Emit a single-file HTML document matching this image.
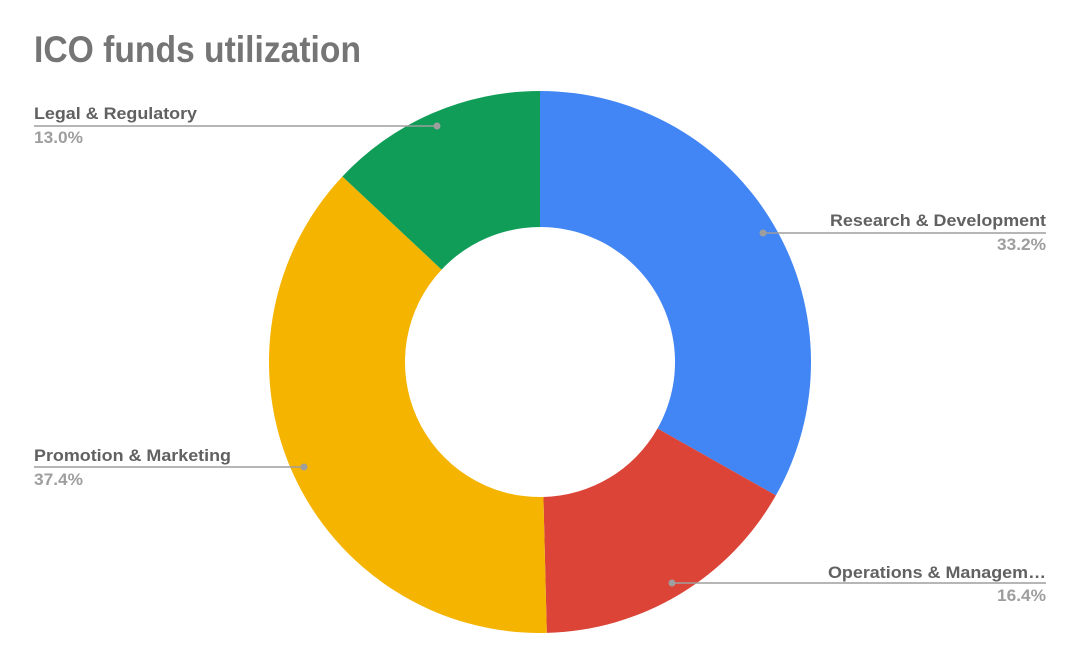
<!DOCTYPE html>
<html><head><meta charset="utf-8"><style>
html,body{margin:0;padding:0;background:#fff;}
svg{display:block;}
text{font-family:"Liberation Sans",Arial,sans-serif;font-weight:bold;}
</style></head><body>
<svg width="1079" height="667" viewBox="0 0 1079 667">
<text x="34" y="62" font-size="37" fill="#757575" textLength="327" lengthAdjust="spacingAndGlyphs">ICO funds utilization</text>
<path d="M540,91 A271,271 0 0 1 775.9,495.4 L657.5,428.5 A135,135 0 0 0 540,227 Z" fill="#4285f4"/>
<path d="M775.9,495.4 A271,271 0 0 1 546.8,632.9 L543.4,497 A135,135 0 0 0 657.5,428.5 Z" fill="#db4437"/>
<path d="M546.8,632.9 A271,271 0 0 1 342.4,176.5 L441.6,269.6 A135,135 0 0 0 543.4,497 Z" fill="#f4b400"/>
<path d="M342.4,176.5 A271,271 0 0 1 540,91 L540,227 A135,135 0 0 0 441.6,269.6 Z" fill="#0f9d58"/>
<g stroke="#9e9e9e" stroke-width="1.5" fill="none">
<line x1="34" y1="126" x2="437" y2="126"/>
<line x1="763" y1="233" x2="1046" y2="233"/>
<line x1="34" y1="467" x2="304" y2="467"/>
<line x1="672" y1="583" x2="1046" y2="583"/>
</g>
<g fill="#9e9e9e">
<circle cx="437" cy="126" r="3.5"/><circle cx="763" cy="233" r="3.5"/>
<circle cx="304" cy="467" r="3.5"/><circle cx="672" cy="583" r="3.5"/>
</g>
<g font-size="16.5" fill="#616161">
<text x="34" y="119" textLength="163" lengthAdjust="spacingAndGlyphs">Legal &amp; Regulatory</text>
<text x="830" y="226" textLength="216" lengthAdjust="spacingAndGlyphs">Research &amp; Development</text>
<text x="34" y="461" textLength="197" lengthAdjust="spacingAndGlyphs">Promotion &amp; Marketing</text>
<text x="828" y="578" textLength="218" lengthAdjust="spacingAndGlyphs">Operations &amp; Managem…</text>
</g>
<g font-size="16.5" fill="#9e9e9e">
<text x="34" y="143" textLength="49" lengthAdjust="spacingAndGlyphs">13.0%</text>
<text x="997" y="250" textLength="49" lengthAdjust="spacingAndGlyphs">33.2%</text>
<text x="34" y="485" textLength="49" lengthAdjust="spacingAndGlyphs">37.4%</text>
<text x="997" y="601" textLength="49" lengthAdjust="spacingAndGlyphs">16.4%</text>
</g>
</svg>
</body></html>
